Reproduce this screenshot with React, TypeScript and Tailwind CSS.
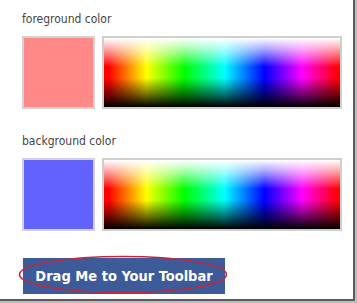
import React from "react";

const labelFont = { fontFamily: '"DejaVu Sans Condensed", "Liberation Sans", sans-serif' };

function Picker({ label, color, first }: { label: string; color: string; first?: boolean }) {
  return (
    <div className={first ? "pt-[11px]" : "pt-[24px]"}>
      <div className="text-[12px] leading-[16px] text-[#444444]" style={labelFont}>
        {label}
      </div>
      <div className="mt-[9px] flex gap-[7px]">
        <div className="w-[73px] h-[73px] border-2 border-[#d2d2d2]" style={{ backgroundColor: color }} />
        <div className="relative w-[240px] h-[73px] border-2 border-[#cfcfcf] bg-[linear-gradient(to_right,#ff0000_2%,#ffff00_18%,#00ff00_34%,#00ffff_51%,#0000ff_68%,#ff00ff_84%,#ff0000_99%)]">
          <div className="absolute inset-0 bg-[linear-gradient(to_bottom,#ffffff_0%,rgba(255,255,255,0.65)_16%,rgba(255,255,255,0)_42%,rgba(0,0,0,0)_58%,rgba(0,0,0,0.55)_82%,#000000_100%)]" />
        </div>
      </div>
    </div>
  );
}

export default function App() {
  return (
    <div className="w-[357px] h-[303px] bg-[#bdbdbd] overflow-hidden">
      <div className="w-[355px] h-[301px] bg-white border-r-2 border-b-2 border-[#5c5c5c] pl-[22px]">
        <Picker label="foreground color" color="#ff8888" first />
        <Picker label="background color" color="#6262ff" />
        <div className="relative mt-[27px] ml-[1px] w-[202px] h-[36px] bg-[#3d5a99] flex items-center justify-center">
          <span
            className="text-white font-bold text-[14.5px] leading-none"
            style={{ fontFamily: '"DejaVu Sans Condensed", "Liberation Sans", sans-serif' }}
          >
            Drag Me to Your Toolbar
          </span>
          <svg className="absolute left-[-5px] top-[-3px]" width="210" height="40" viewBox="0 0 210 40">
            <ellipse cx="105" cy="19.5" rx="103.5" ry="18" fill="none" stroke="#c0283f" strokeWidth="1.6" />
          </svg>
        </div>
      </div>
    </div>
  );
}
